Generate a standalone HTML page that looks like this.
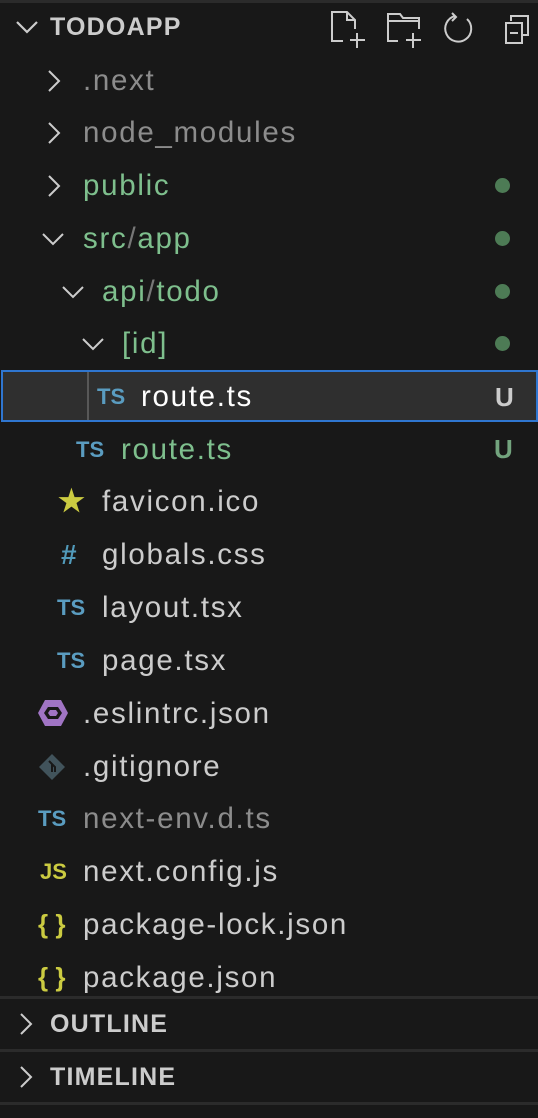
<!DOCTYPE html>
<html><head><meta charset="utf-8"><style>
body{margin:0;width:538px;height:1118px;background:#181818;font-family:"Liberation Sans",sans-serif;overflow:hidden;position:relative;color:#cccccc}
.r{position:absolute;left:0;width:538px;height:53px;line-height:53px;font-size:29.5px;letter-spacing:1.7px;white-space:nowrap}
.t{position:absolute;top:0}
.ic{position:absolute;top:0;font-weight:bold;font-size:22px;letter-spacing:0}
.ts{color:#5a9cc0}
.dot{position:absolute;left:495px;top:19px;width:15px;height:15px;border-radius:50%;background:#4d7b55}
.u{position:absolute;left:494px;font-size:26px;font-weight:bold;color:#73a47e;letter-spacing:0}
.g{color:#7ebf8d}
.chev{position:absolute;top:0}
.hdr{font-weight:bold;font-size:25px;letter-spacing:1.2px;color:#cccccc}
.line{position:absolute;left:0;width:538px;height:3px;background:#2b2b2b}
</style></head><body>
<div style="position:absolute;left:0;top:0;width:538px;height:3px;background:#2b2b2b"></div>
<div class="r" style="top:1px">
<svg class="chev" style="left:14px;top:16px" width="26" height="20"><path d="M3 5 L13 15 L23 5" stroke="#ccc" stroke-width="2.2" fill="none"/></svg>
<span class="t hdr" style="left:50px">TODOAPP</span>
<svg style="position:absolute;left:330px;top:8px" width="208" height="40" fill="none" stroke="#ccc" stroke-width="2">
<path d="M13 32 H2 V3 H17 L25 11 V20 M17 3 V11 H25 M27 24 V39 M20 31 H35"/>
<path d="M68 32 H58 V5 H70 L73 9 H89 V20 M58 12 H89 M83 24 V39 M76 31 H91"/>
<path d="M125 7 A13 13 0 1 0 137 10 M122 4 L126 8 L122 12" />
<path d="M181 12 V7 H198 V26 H193 M176 14 H192 V34 H176 Z M180 24 H188"/>
</svg>
</div>
<div class="r" style="top:54px"><svg class="chev" style="left:46px;top:15px" width="16" height="24"><path d="M3 2 L13 12 L3 22" stroke="#ccc" stroke-width="2" fill="none"/></svg><span class="t" style="left:83px;color:#8c8c8c">.next</span></div>
<div class="r" style="top:106px"><svg class="chev" style="left:46px;top:15px" width="16" height="24"><path d="M3 2 L13 12 L3 22" stroke="#ccc" stroke-width="2" fill="none"/></svg><span class="t" style="left:83px;color:#8c8c8c">node_modules</span></div>
<div class="r" style="top:159px"><svg class="chev" style="left:46px;top:15px" width="16" height="24"><path d="M3 2 L13 12 L3 22" stroke="#ccc" stroke-width="2" fill="none"/></svg><span class="t g" style="left:83px">public</span><span class="dot"></span></div>
<div class="r" style="top:212px"><svg class="chev" style="left:40px;top:18px" width="26" height="18"><path d="M3 4 L13 14 L23 4" stroke="#ccc" stroke-width="2" fill="none"/></svg><span class="t g" style="left:83px">src<span style="color:#777">/</span>app</span><span class="dot"></span></div>
<div class="r" style="top:265px"><svg class="chev" style="left:60px;top:18px" width="26" height="18"><path d="M3 4 L13 14 L23 4" stroke="#ccc" stroke-width="2" fill="none"/></svg><span class="t g" style="left:102px">api<span style="color:#777">/</span>todo</span><span class="dot"></span></div>
<div class="r" style="top:317px"><svg class="chev" style="left:80px;top:18px" width="26" height="18"><path d="M3 4 L13 14 L23 4" stroke="#ccc" stroke-width="2" fill="none"/></svg><span class="t g" style="left:122px">[id]</span><span class="dot"></span></div>
<div class="r" style="top:370px;height:52px;line-height:50px;background:#2f2f2f;border:2px solid #2f76d0;box-sizing:border-box;left:1px;width:537px">
<div style="position:absolute;left:84px;top:0;width:2px;height:48px;background:#585858"></div>
<span class="ic ts" style="left:94px">TS</span><span class="t" style="left:138px;color:#fff">route.ts</span><span class="u" style="left:492px;color:#ccc">U</span></div>
<div class="r" style="top:423px"><span class="ic ts" style="left:76px">TS</span><span class="t g" style="left:121px">route.ts</span><span class="u">U</span></div>
<div class="r" style="top:475px"><span class="ic" style="left:58px;color:#cbcb41;font-size:30px">★</span><span class="t" style="left:102px">favicon.ico</span></div>
<div class="r" style="top:528px"><span class="ic" style="left:61px;color:#519aba;font-size:28px">#</span><span class="t" style="left:102px">globals.css</span></div>
<div class="r" style="top:581px"><span class="ic ts" style="left:57px">TS</span><span class="t" style="left:102px">layout.tsx</span></div>
<div class="r" style="top:634px"><span class="ic ts" style="left:57px">TS</span><span class="t" style="left:102px">page.tsx</span></div>
<div class="r" style="top:687px"><svg style="position:absolute;left:37px;top:11px" width="32" height="30"><path d="M8 2 H24 L31 15 L24 28 H8 L1 15 Z" fill="#a074c4"/><path d="M11 9 H21 L25 15 L21 21 H11 L7 15 Z" fill="#181818"/><path d="M13 12 H19 L21 15 L19 18 H13 L11 15 Z" fill="#a074c4"/></svg><span class="t" style="left:83px">.eslintrc.json</span></div>
<div class="r" style="top:740px"><svg style="position:absolute;left:38px;top:13px" width="28" height="28"><path d="M14 1 L27 14 L14 27 L1 14 Z" fill="#41535b"/><path d="M11 8 L17 14 V19 M14 11 L14 19" stroke="#181818" stroke-width="2" fill="none"/></svg><span class="t" style="left:83px">.gitignore</span></div>
<div class="r" style="top:792px"><span class="ic ts" style="left:38px">TS</span><span class="t" style="left:83px;color:#8c8c8c">next-env.d.ts</span></div>
<div class="r" style="top:845px"><span class="ic" style="left:40px;color:#cbcb41">JS</span><span class="t" style="left:83px">next.config.js</span></div>
<div class="r" style="top:898px"><span class="ic" style="left:38px;color:#cbcb41;font-size:26px">{ }</span><span class="t" style="left:83px">package-lock.json</span></div>
<div class="r" style="top:951px"><span class="ic" style="left:38px;color:#cbcb41;font-size:26px">{ }</span><span class="t" style="left:83px">package.json</span></div>
<div class="line" style="top:996px"></div>
<div class="r" style="top:998px;height:52px;line-height:52px"><svg class="chev" style="left:18px;top:14px" width="16" height="24"><path d="M3 2 L13 12 L3 22" stroke="#ccc" stroke-width="2" fill="none"/></svg><span class="t hdr" style="left:50px">OUTLINE</span></div>
<div class="line" style="top:1049px"></div>
<div class="r" style="top:1051px;height:52px;line-height:52px"><svg class="chev" style="left:18px;top:14px" width="16" height="24"><path d="M3 2 L13 12 L3 22" stroke="#ccc" stroke-width="2" fill="none"/></svg><span class="t hdr" style="left:50px">TIMELINE</span></div>
<div class="line" style="top:1102px"></div>
<div style="position:absolute;left:0;top:1105px;width:538px;height:13px;background:#181818"></div>
</body></html>
